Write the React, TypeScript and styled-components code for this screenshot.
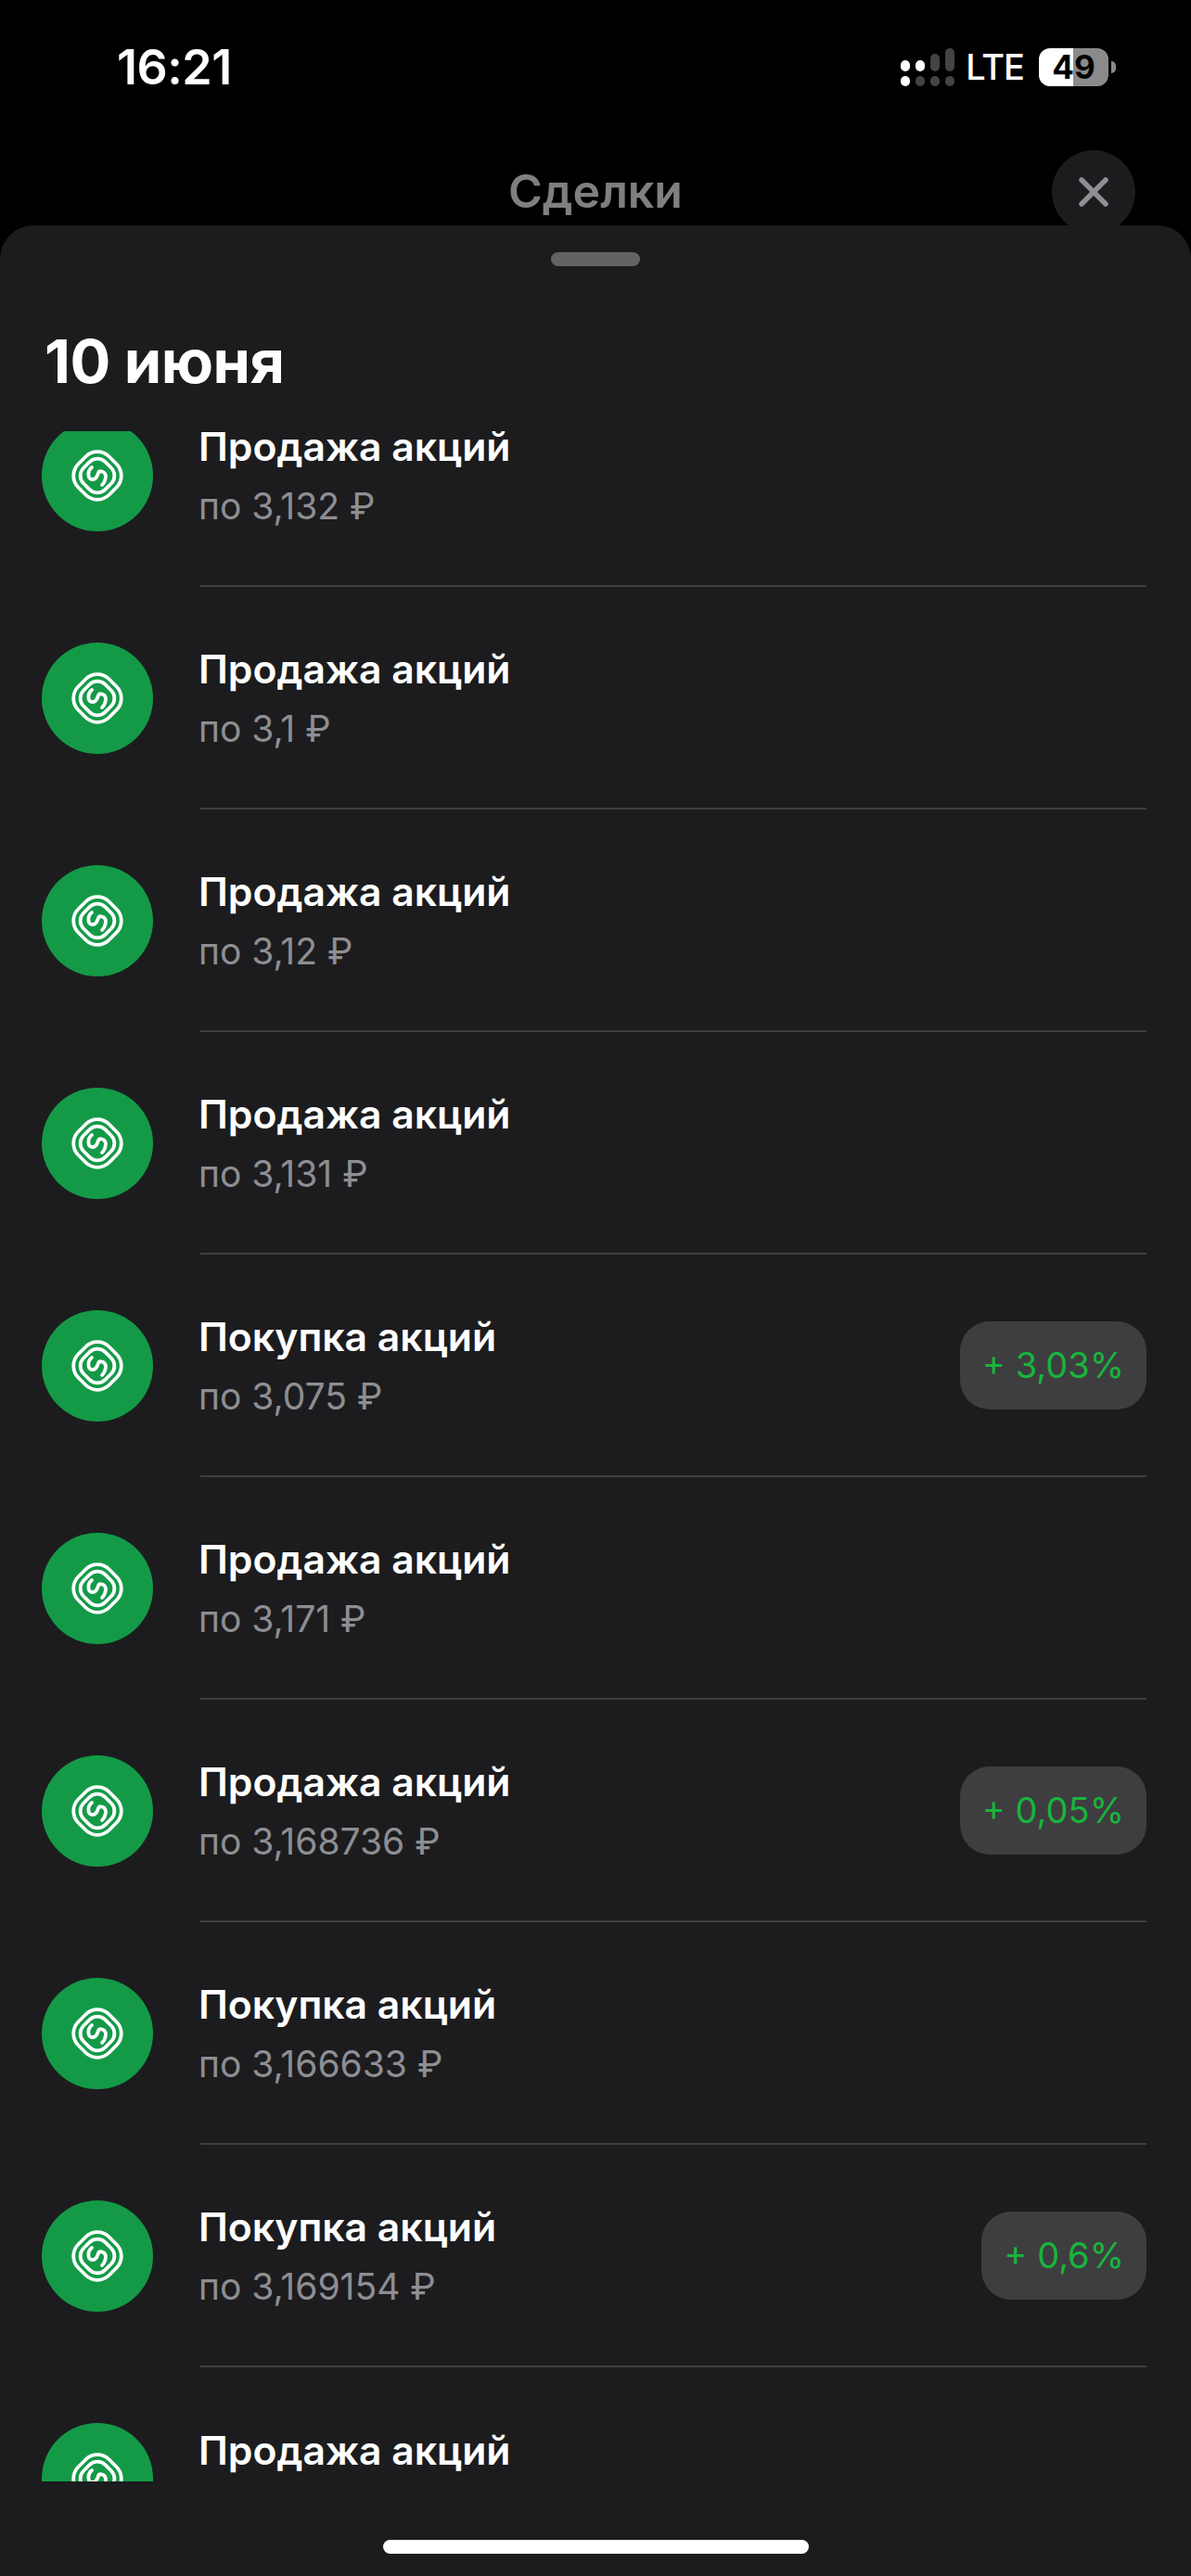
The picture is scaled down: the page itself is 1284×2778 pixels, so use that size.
import styled, { createGlobalStyle } from "styled-components";

const GlobalStyle = createGlobalStyle`
	html, body {
		margin: 0;
		padding: 0;
		background: #000;
	}
	* {
		box-sizing: border-box;
	}
`;

const Screen = styled.div`
	width: 1284px;
	height: 2778px;
	background: #000;
	overflow: hidden;
	font-family: Inter, "Liberation Sans", sans-serif;
	display: flex;
	flex-direction: column;
`;

const StatusBar = styled.div`
	height: 144px;
	padding: 0 89px 0 126px;
	display: flex;
	align-items: center;
	justify-content: space-between;
`;

const Time = styled.span`
	color: #fff;
	font-size: 52px;
	font-weight: 600;
	letter-spacing: -0.5px;
`;

const StatusRight = styled.div`
	display: flex;
	align-items: center;
	gap: 16px;

	svg {
		margin-right: -4px;
	}
`;

const Network = styled.span`
	color: #fff;
	font-size: 38px;
	font-weight: 500;
	line-height: 41px;
	letter-spacing: -1px;
`;

const Battery = styled.div`
	width: 75px;
	height: 41px;
	border-radius: 12px;
	background: linear-gradient(90deg, #fff 0 49%, #8a8a8a 49% 100%);
	color: #000;
	font-size: 35px;
	font-weight: 700;
	line-height: 41px;
	text-align: center;
	position: relative;

	&::after {
		content: "";
		position: absolute;
		right: -8px;
		top: 14px;
		width: 5px;
		height: 13px;
		border-radius: 0 6px 6px 0;
		background: #8a8a8a;
	}
`;

const Header = styled.div`
	height: 99px;
	display: grid;
	grid-template-columns: 1fr auto 1fr;
	align-items: center;
`;

const HeaderTitle = styled.div`
	grid-column: 2;
	color: #7f7f7f;
	font-size: 50px;
	font-weight: 600;
	line-height: 60px;
	margin-top: 15px;
`;

const CloseButton = styled.div`
	grid-column: 3;
	justify-self: end;
	width: 90px;
	height: 90px;
	margin: 18px 60px 0 0;
	border-radius: 50%;
	background: #1c1c1e;
	display: flex;
	align-items: center;
	justify-content: center;
`;

const Sheet = styled.div`
	position: relative;
	flex: 1;
	background: #1c1c1e;
	border-radius: 36px 36px 0 0;
	display: flex;
	flex-direction: column;
	align-items: stretch;
`;

const Grabber = styled.div`
	width: 96px;
	height: 15px;
	margin: 29px auto 0;
	border-radius: 8px;
	background: #636366;
`;

const DateHeading = styled.h2`
	margin: 63px 0 0 48px;
	color: #fff;
	font-size: 65px;
	font-weight: 700;
	line-height: 80px;
	letter-spacing: -0.5px;
`;

const ListViewport = styled.div`
	margin-top: 35px;
	height: 2211px;
	overflow: hidden;
`;

const List = styled.div`
	margin-top: -72px;
`;

const Row = styled.div`
	height: 240px;
	padding: 0 48px 0 45px;
	display: flex;
	align-items: center;
`;

const Logo = styled.div`
	flex: none;
	width: 120px;
	height: 120px;
	border-radius: 50%;
	background: #149a47;
	display: flex;
	align-items: center;
	justify-content: center;
`;

const RowBody = styled.div<{ $last: boolean }>`
	flex: 1;
	align-self: stretch;
	margin-left: 51px;
	display: flex;
	align-items: center;
	justify-content: space-between;
	border-bottom: ${({ $last }) => ($last ? "0" : "2px solid #3f3f41")};
`;

const RowText = styled.div`
	display: flex;
	flex-direction: column;
	gap: 10px;
	margin: 4px 0 0 -2px;
`;

const RowTitle = styled.div`
	color: #fff;
	font-size: 42.7px;
	font-weight: 600;
	line-height: 54px;
`;

const RowPrice = styled.div`
	color: #8e8e93;
	font-size: 39px;
	font-weight: 400;
	line-height: 54px;
`;

const Pill = styled.div`
	height: 95px;
	padding: 0 24px;
	border-radius: 32px;
	background: #3e3e40;
	color: #17b53c;
	font-size: 38px;
	line-height: 95px;
	white-space: nowrap;
`;

const HomeBar = styled.div`
	width: 459px;
	height: 15px;
	margin: 63px auto 0;
	border-radius: 8px;
	background: #fff;
`;

function SignalIcon() {
	return (
		<svg width="58" height="41" viewBox="0 0 58 41">
			<rect x="0" y="13" width="10" height="12" rx="5" fill="#fff" />
			<rect x="16" y="13" width="10" height="12" rx="5" fill="#fff" />
			<rect x="32" y="6" width="10" height="19" rx="5" fill="#444" />
			<rect x="48" y="0" width="10" height="25" rx="5" fill="#444" />
			<rect x="0" y="30" width="10" height="11" rx="5" fill="#fff" />
			<rect x="16" y="30" width="10" height="11" rx="5" fill="#444" />
			<rect x="32" y="30" width="10" height="11" rx="5" fill="#444" />
			<rect x="48" y="30" width="10" height="11" rx="5" fill="#444" />
		</svg>
	);
}

function CloseIcon() {
	return (
		<svg width="32" height="32" viewBox="0 0 32 32">
			<path
				d="M3 3L29 29M29 3L3 29"
				stroke="#8e8e93"
				strokeWidth="5.5"
				strokeLinecap="round"
			/>
		</svg>
	);
}

function BankLogo() {
	return (
		<svg width="58" height="58" viewBox="0 0 58 58" fill="none" stroke="#fff" strokeWidth="3.8" strokeLinecap="round">
			<rect x="5.5" y="5.5" width="47" height="47" rx="18" transform="rotate(45 29 29)" />
			<rect x="12.5" y="12.5" width="33" height="33" rx="12" transform="rotate(45 29 29)" />
			<path d="M23 20C18 24 18 33 24 33C28 33 29 29 30 26C31 23 37 24 38 29C38 33 37 36 34 39" />
		</svg>
	);
}

const deals = [
	{ title: "Продажа акций", price: "по 3,132 ₽" },
	{ title: "Продажа акций", price: "по 3,1 ₽" },
	{ title: "Продажа акций", price: "по 3,12 ₽" },
	{ title: "Продажа акций", price: "по 3,131 ₽" },
	{ title: "Покупка акций", price: "по 3,075 ₽", change: "+ 3,03%" },
	{ title: "Продажа акций", price: "по 3,171 ₽" },
	{ title: "Продажа акций", price: "по 3,168736 ₽", change: "+ 0,05%" },
	{ title: "Покупка акций", price: "по 3,166633 ₽" },
	{ title: "Покупка акций", price: "по 3,169154 ₽", change: "+ 0,6%" },
	{ title: "Продажа акций", price: "" },
];

export default function App() {
	return (
		<Screen>
			<GlobalStyle />
			<StatusBar>
				<Time>16:21</Time>
				<StatusRight>
					<SignalIcon />
					<Network>LTE</Network>
					<Battery>49</Battery>
				</StatusRight>
			</StatusBar>
			<Header>
				<HeaderTitle>Сделки</HeaderTitle>
				<CloseButton>
					<CloseIcon />
				</CloseButton>
			</Header>
			<Sheet>
				<Grabber />
				<DateHeading>10 июня</DateHeading>
				<ListViewport>
					<List>
						{deals.map((deal, i) => (
							<Row key={i}>
								<Logo>
									<BankLogo />
								</Logo>
								<RowBody $last={i === deals.length - 1}>
									<RowText>
										<RowTitle>{deal.title}</RowTitle>
										<RowPrice>{deal.price || "\u00a0"}</RowPrice>
									</RowText>
									{deal.change && <Pill>{deal.change}</Pill>}
								</RowBody>
							</Row>
						))}
					</List>
				</ListViewport>
				<HomeBar />
			</Sheet>
		</Screen>
	);
}
